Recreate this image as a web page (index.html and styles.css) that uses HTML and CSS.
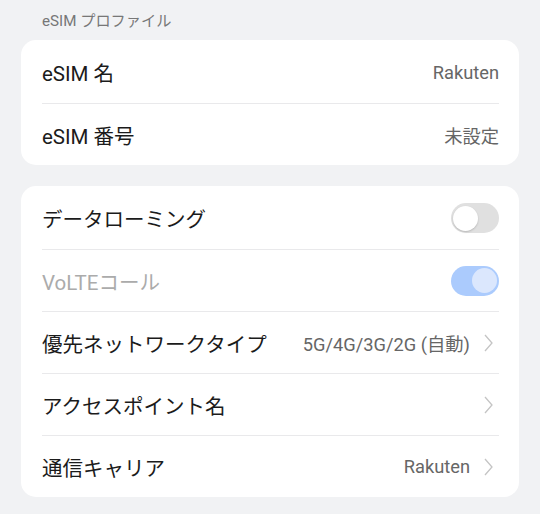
FILE: index.html
```html
<!DOCTYPE html>
<html lang="ja">
<head>
    <meta charset="UTF-8">
    <meta name="viewport" content="width=device-width, initial-scale=1.0">
    <title>eSIM</title>
    <link rel="stylesheet" href="styles.css">
</head>
<body>
    <div id="page">
        <p class="sechead">eSIM プロファイル</p>
        <div class="card">
            <div class="row">
                <span class="label">eSIM 名</span>
                <span class="value">Rakuten</span>
            </div>
            <div class="row">
                <span class="label">eSIM 番号</span>
                <span class="value">未設定</span>
            </div>
        </div>

        <div class="card">
            <div class="row">
                <span class="label">データローミング</span>
                <span class="toggle"><span class="knob"></span></span>
            </div>
            <div class="row">
                <span class="label disabled">VoLTEコール</span>
                <span class="toggle on"><span class="knob"></span></span>
            </div>
            <div class="row">
                <span class="label">優先ネットワークタイプ</span>
                <span class="value">5G/4G/3G/2G (自動)</span>
                <svg class="chev" width="9" height="18" viewBox="0 0 9 18"><path d="M1 1 L8 9 L1 17" fill="none" stroke="#c4c4c4" stroke-width="1.3"/></svg>
            </div>
            <div class="row">
                <span class="label">アクセスポイント名</span>
                <svg class="chev" width="9" height="18" viewBox="0 0 9 18"><path d="M1 1 L8 9 L1 17" fill="none" stroke="#c4c4c4" stroke-width="1.3"/></svg>
            </div>
            <div class="row">
                <span class="label">通信キャリア</span>
                <span class="value">Rakuten</span>
                <svg class="chev" width="9" height="18" viewBox="0 0 9 18"><path d="M1 1 L8 9 L1 17" fill="none" stroke="#c4c4c4" stroke-width="1.3"/></svg>
            </div>
        </div>
    </div>
</body>
</html>
```
FILE: styles.css
```css
*{
    font-family: Roboto, 'Noto Sans CJK JP', sans-serif;
    box-sizing: border-box;
}

body{
    margin: 0;
    background-color: #f1f2f4;
}

#page{
    padding: 11px 21px 0 21px;
}

.sechead{
    margin: 0 0 9px 0;
    padding-left: 21px;
    font-size: 15.2px;
    line-height: 20px;
    color: #777;
}

.card{
    background-color: white;
    border-radius: 15px;
    padding: 1px 20px 0 21px;
    margin-bottom: 21px;
}

.row{
    display: flex;
    align-items: center;
    height: 62px;
}

.row + .row{
    border-top: 1px solid #e9e9eb;
}

.label{
    flex: 1;
    font-size: 20.5px;
    color: #1b1b1b;
}

.label.disabled{
    color: #ababab;
}

.value{
    font-size: 18.3px;
    color: #666;
}

.chev{
    margin-left: 14px;
    margin-right: 6px;
}

.toggle{
    width: 48px;
    height: 30px;
    border-radius: 15px;
    background-color: #e0e0e0;
    display: flex;
    align-items: center;
    padding: 0 2px;
}

.knob{
    width: 25px;
    height: 25px;
    border-radius: 50%;
    background-color: white;
    box-shadow: 0 1px 2px rgba(0, 0, 0, 0.18);
}

.toggle.on{
    background-color: #abcbfd;
    justify-content: flex-end;
}

.toggle.on .knob{
    background-color: #dbe7fd;
    box-shadow: none;
}
```
